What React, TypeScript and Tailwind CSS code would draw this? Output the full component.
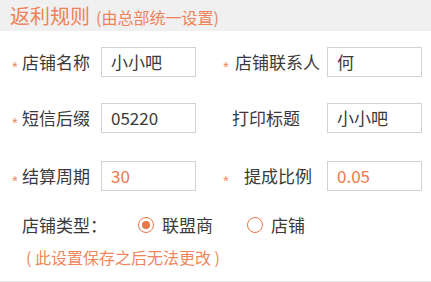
const font = {
	fontFamily: '"Noto Sans CJK SC", "Noto Sans", sans-serif',
};

function Star({ className = "" }: { className?: string }) {
	return (
		<span
			className={`mt-[9px] font-['Liberation_Sans',sans-serif] text-[15px] leading-none text-[#f0875c] ${className}`}
		>
			*
		</span>
	);
}

function Field({
	value,
	accent = false,
}: {
	value: string;
	accent?: boolean;
}) {
	return (
		<div
			className={`flex h-[30px] w-[95px] shrink-0 items-center border border-[#d2d2d2] bg-white pl-[9px] text-[17px] ${
				accent ? "text-[#f0784a]" : "text-[#3a3a3a]"
			}`}
		>
			{value}
		</div>
	);
}

function Radio({ checked, label }: { checked: boolean; label: string }) {
	return (
		<div className="flex items-center">
			<span className="flex h-[16px] w-[16px] items-center justify-center rounded-full border-[1.5px] border-[#e9774a]">
				{checked && (
					<span className="h-[8px] w-[8px] rounded-full bg-[#e9774a]" />
				)}
			</span>
			<span className="ml-[8px] text-[17px] text-[#3a3a3a]">{label}</span>
		</div>
	);
}

export default function App() {
	return (
		<div
			className="h-[282px] w-[431px] overflow-hidden border-b border-[#e6e6e6] bg-white"
			style={font}
		>
			<header className="flex h-[31px] items-center bg-[#f0f0f0] pl-[10px]">
				<span className="text-[20px] leading-none text-[#ee8258]">
					返利规则
				</span>
				<span className="ml-[6px] mt-[2px] text-[16px] leading-none text-[#ee8258]">
					(由总部统一设置)
				</span>
			</header>

			<div className="mt-[16px] flex h-[30px] items-center">
				<Star className="ml-[12px] w-[10px]" />
				<span className="w-[79px] text-[17px] text-[#3a3a3a]">店铺名称</span>
				<Field value="小小吧" />
				<Star className="ml-[27px] w-[12px]" />
				<span className="w-[92px] text-[17px] text-[#3a3a3a]">店铺联系人</span>
				<Field value="何" />
			</div>

			<div className="mt-[26px] flex h-[30px] items-center">
				<Star className="ml-[12px] w-[10px]" />
				<span className="w-[79px] text-[17px] text-[#3a3a3a]">短信后缀</span>
				<Field value="05220" />
				<span className="ml-[36px] w-[95px] text-[17px] text-[#3a3a3a]">
					打印标题
				</span>
				<Field value="小小吧" />
			</div>

			<div className="mt-[28px] flex h-[30px] items-center">
				<Star className="ml-[12px] w-[10px]" />
				<span className="w-[79px] text-[17px] text-[#3a3a3a]">结算周期</span>
				<Field value="30" accent />
				<Star className="ml-[27px] w-[21px]" />
				<span className="w-[83px] text-[17px] text-[#3a3a3a]">提成比例</span>
				<Field value="0.05" accent />
			</div>

			<div className="mt-[19px] flex h-[30px] items-center pl-[22px]">
				<span className="w-[116px] text-[17px] text-[#3a3a3a]">店铺类型：</span>
				<Radio checked label="联盟商" />
				<div className="ml-[34px]">
					<Radio checked={false} label="店铺" />
				</div>
			</div>

			<div className="mt-[5px] pl-[26px] text-[16px] text-[#f0875c]">
				( 此设置保存之后无法更改 )
			</div>
		</div>
	);
}
